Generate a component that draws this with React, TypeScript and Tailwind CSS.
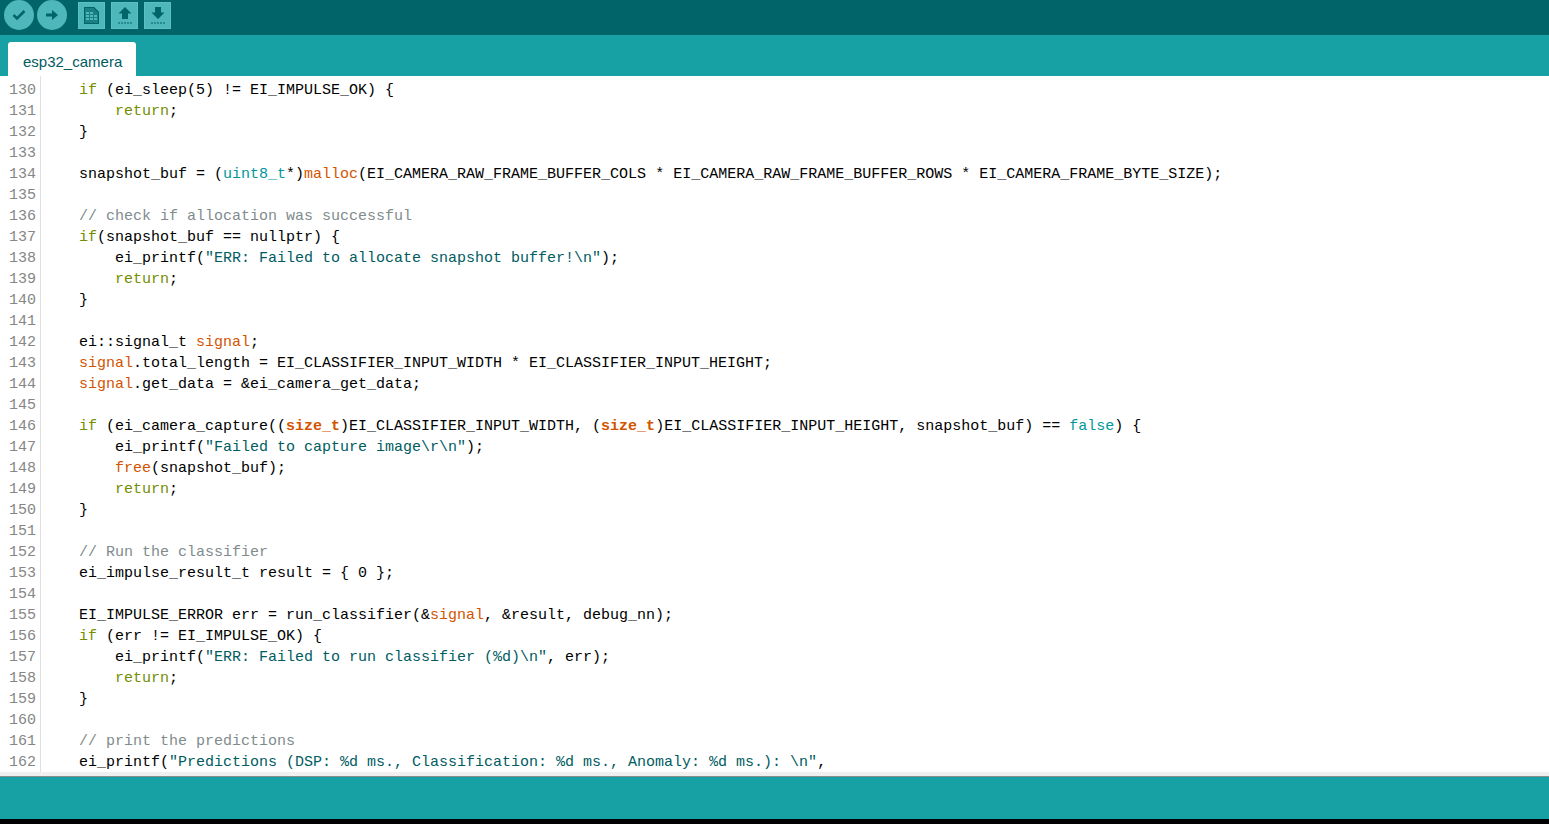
import React from 'react';

// k keyword, f function, t type, s string, c comment, b bold type, n plain
type Token = [string, string];

const styles: Record<string, string> = {
  n: 'text-black',
  k: 'text-[#728e00]',
  f: 'text-[#d35400]',
  t: 'text-[#00979c]',
  s: 'text-[#005c5f]',
  c: 'text-[#7f8c8d]',
  b: 'text-[#d35400] font-bold',
};

const code: Token[][] = [
  [['// instead of wait_ms, we\'ll wait on the signal, this allows threads to cancel us...', 'c']],
  [['if', 'k'], [' (ei_sleep(5) != EI_IMPULSE_OK) {', 'n']],
  [['    ', 'n'], ['return', 'k'], [';', 'n']],
  [['}', 'n']],
  [],
  [['snapshot_buf = (', 'n'], ['uint8_t', 't'], ['*)', 'n'], ['malloc', 'f'], ['(EI_CAMERA_RAW_FRAME_BUFFER_COLS * EI_CAMERA_RAW_FRAME_BUFFER_ROWS * EI_CAMERA_FRAME_BYTE_SIZE);', 'n']],
  [],
  [['// check if allocation was successful', 'c']],
  [['if', 'k'], ['(snapshot_buf == nullptr) {', 'n']],
  [['    ei_printf(', 'n'], ['"ERR: Failed to allocate snapshot buffer!\\n"', 's'], [');', 'n']],
  [['    ', 'n'], ['return', 'k'], [';', 'n']],
  [['}', 'n']],
  [],
  [['ei::signal_t ', 'n'], ['signal', 'f'], [';', 'n']],
  [['signal', 'f'], ['.total_length = EI_CLASSIFIER_INPUT_WIDTH * EI_CLASSIFIER_INPUT_HEIGHT;', 'n']],
  [['signal', 'f'], ['.get_data = &ei_camera_get_data;', 'n']],
  [],
  [['if', 'k'], [' (ei_camera_capture((', 'n'], ['size_t', 'b'], [')EI_CLASSIFIER_INPUT_WIDTH, (', 'n'], ['size_t', 'b'], [')EI_CLASSIFIER_INPUT_HEIGHT, snapshot_buf) == ', 'n'], ['false', 't'], [') {', 'n']],
  [['    ei_printf(', 'n'], ['"Failed to capture image\\r\\n"', 's'], [');', 'n']],
  [['    ', 'n'], ['free', 'f'], ['(snapshot_buf);', 'n']],
  [['    ', 'n'], ['return', 'k'], [';', 'n']],
  [['}', 'n']],
  [],
  [['// Run the classifier', 'c']],
  [['ei_impulse_result_t result = { 0 };', 'n']],
  [],
  [['EI_IMPULSE_ERROR err = run_classifier(&', 'n'], ['signal', 'f'], [', &result, debug_nn);', 'n']],
  [['if', 'k'], [' (err != EI_IMPULSE_OK) {', 'n']],
  [['    ei_printf(', 'n'], ['"ERR: Failed to run classifier (%d)\\n"', 's'], [', err);', 'n']],
  [['    ', 'n'], ['return', 'k'], [';', 'n']],
  [['}', 'n']],
  [],
  [['// print the predictions', 'c']],
  [['ei_printf(', 'n'], ['"Predictions (DSP: %d ms., Classification: %d ms., Anomaly: %d ms.): \\n"', 's'], [',', 'n']],
];

const RoundButton = ({ children }: { children: React.ReactNode }) => (
  <div className="w-[30px] h-[30px] rounded-full bg-[#4db7bb] flex items-center justify-center">{children}</div>
);

const SquareButton = ({ children }: { children: React.ReactNode }) => (
  <div className="w-[27px] h-[27px] bg-[#4db7bb] border border-[#5cbfc3] flex items-center justify-center">{children}</div>
);

const Toolbar = () => (
  <div className="h-[35px] bg-[#006468] flex items-center pl-[4px] pb-[5px]">
    <div className="flex gap-[3px]">
      <RoundButton>
        <svg width="14" height="12" viewBox="0 0 14 12">
          <path d="M1.500 6l3.500 3.500L12.500 2" fill="none" stroke="#006468" strokeWidth="2.500" />
        </svg>
      </RoundButton>
      <RoundButton>
        <svg width="12" height="12" viewBox="0 0 12 12">
          <path d="M0 4.500h6V1l6 5-6 5V7.500H0z" fill="#006468" />
        </svg>
      </RoundButton>
    </div>
    <div className="flex gap-[6px] ml-[11px]">
      <SquareButton>
        <svg width="15" height="17" viewBox="0 0 15 17">
          <path d="M0 0h10l5 5v12H0z" fill="#1a7f83" />
          <path d="M0 0h10l5 5v12H0zM1 1v15h13V5.500L9.500 1z" fill="#006468" fillRule="evenodd" />
          <path d="M2 5h3v2H2zM6 5h3v2H6zM2 8h3v2H2zM6 8h3v2H6zM10 8h3v2h-3zM2 11h3v2H2zM6 11h3v2H6zM10 11h3v2h-3z" fill="#4db7bb" />
        </svg>
      </SquareButton>
      <SquareButton>
        <svg width="14" height="17" viewBox="0 0 14 17">
          <path d="M7 0l6.500 6.500H10V12H4V6.500H0.500z" fill="#006468" />
          <path d="M0 16h14" stroke="#1a7f83" strokeWidth="1.500" strokeDasharray="2 1" />
        </svg>
      </SquareButton>
      <SquareButton>
        <svg width="14" height="17" viewBox="0 0 14 17">
          <path d="M4 0h6v5.500h3.500L7 12 0.500 5.500H4z" fill="#006468" />
          <path d="M0 16h14" stroke="#1a7f83" strokeWidth="1.500" strokeDasharray="2 1" />
        </svg>
      </SquareButton>
    </div>
  </div>
);

export default function App() {
  return (
    <div className="w-[1549px] h-[824px] flex flex-col overflow-hidden bg-black">
      <Toolbar />
      <div className="h-[41px] bg-[#17a1a5] flex items-end pl-[8px]">
        <div className="w-[128px] h-[34px] bg-white rounded-t-[3px] pl-[15px] pt-[10px] text-[15px] leading-[20px] text-[#005c5f] font-['Liberation_Sans',sans-serif]">
          esp32_camera
        </div>
      </div>
      <div className="h-[696px] bg-white overflow-hidden flex font-['Liberation_Mono',monospace] text-[15px] leading-[21px]">
        <div className="w-[41px] shrink-0 border-r border-[#e0e0e0] -mt-[17px] text-[#868686] text-right pr-[4px]">
          {code.map((_, i) => (
            <div key={i} className="h-[21px]">{129 + i}</div>
          ))}
        </div>
        <div className="flex-1 -mt-[17px] pl-[38px] whitespace-pre">
          {code.map((line, i) => (
            <div key={i} className="h-[21px]">
              {line.map(([text, kind], j) => (
                <span key={j} className={styles[kind]}>{text}</span>
              ))}
            </div>
          ))}
        </div>
      </div>
      <div className="h-[5px] bg-[#f0f0f0] border-b border-[#8c8c8c]" />
      <div className="h-[42px] bg-[#17a1a5]" />
      <div className="h-[5px] bg-black" />
    </div>
  );
}
